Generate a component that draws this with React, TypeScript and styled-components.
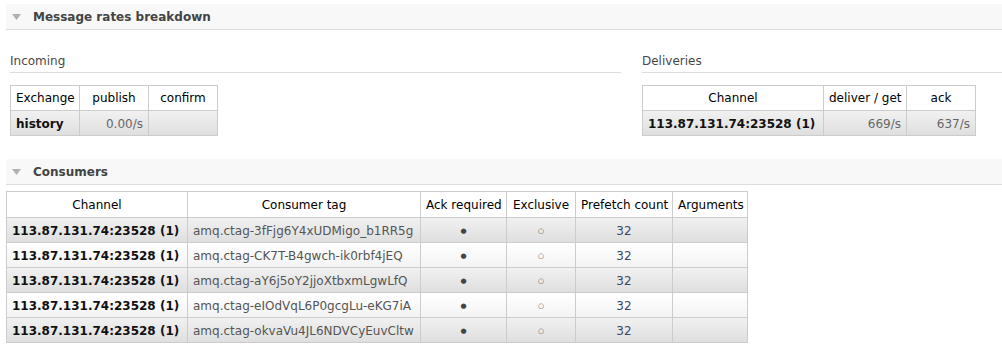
import React from 'react';
import styled, { createGlobalStyle } from 'styled-components';

const Global = createGlobalStyle`
  html, body { margin: 0; padding: 0; background: #fff; }
  body {
    font-family: "DejaVu Sans", Verdana, sans-serif;
    font-size: 12px;
    color: #484848;
  }
`;

const Page = styled.div`
  padding: 4px 0 0 6px;
  overflow: hidden;
`;

const SectionBar = styled.h2<{ $top?: number }>`
  margin: ${p => p.$top ?? 0}px 0 0 0;
  height: 25px;
  display: flex;
  align-items: center;
  gap: 12px;
  padding-left: 6px;
  background: #f8f8f8;
  border-bottom: 1px solid #ddd;
  font-size: 12px;
  font-weight: bold;
  color: #444;
`;

const Triangle = styled.svg`
  width: 9px;
  height: 6px;
  flex: none;
`;

const Columns = styled.div`
  display: grid;
  grid-template-columns: 611px 1fr;
  column-gap: 21px;
  padding-left: 4px;
  margin-top: 23px;
`;

const ColTitle = styled.h3`
  margin: 0;
  font-size: 12px;
  font-weight: normal;
  line-height: 16px;
  padding-bottom: 3px;
  border-bottom: 1px solid #ddd;
  color: #484848;
`;

const Table = styled.table<{ $w: number; $top: number }>`
  border-collapse: collapse;
  table-layout: fixed;
  width: ${p => p.$w}px;
  margin-top: ${p => p.$top}px;
`;

const Col = styled.col<{ $w: number }>`
  width: ${p => p.$w}px;
`;

const Th = styled.th<{ $tall?: boolean }>`
  border: 1px solid #ccc;
  padding: ${p => (p.$tall ? '5px 5px 4px' : '4px 5px')};
  line-height: 16px;
  font-weight: normal;
  color: #000;
  background: #fff;
  text-align: center;
  white-space: nowrap;
`;

const Tr = styled.tr<{ $alt: boolean }>`
  background: ${p =>
    p.$alt
      ? 'linear-gradient(#f1f1f1, #dedede)'
      : 'linear-gradient(#ffffff, #f3f3f3)'};
`;

const Td = styled.td<{ $align?: 'left' | 'right' | 'center'; $bold?: boolean; $tone?: string }>`
  border: 1px solid #ccc;
  padding: 5px 5px 3px;
  height: 16px;
  line-height: 16px;
  white-space: nowrap;
  overflow: hidden;
  text-align: ${p => p.$align ?? 'left'};
  font-weight: ${p => (p.$bold ? 'bold' : 'normal')};
  color: ${p => p.$tone ?? '#484848'};
`;

const Mark = styled.span`
  display: inline-block;
  height: 16px;
  font-size: 7px;
  line-height: 16px;
  vertical-align: top;
`;

const Arrow = () => (
  <Triangle viewBox="0 0 9 6">
    <polygon points="0,0 9,0 4.5,6" fill="#b0b0b0" />
  </Triangle>
);

const tags = [
  'amq.ctag-3fFjg6Y4xUDMigo_b1RR5g',
  'amq.ctag-CK7T-B4gwch-ik0rbf4jEQ',
  'amq.ctag-aY6j5oY2jjoXtbxmLgwLfQ',
  'amq.ctag-eIOdVqL6P0gcgLu-eKG7iA',
  'amq.ctag-okvaVu4JL6NDVCyEuvCltw',
];

const channel = '113.87.131.74:23528 (1)';

export default function App() {
  return (
    <>
      <Global />
      <Page>
        <SectionBar>
          <Arrow />
          Message rates breakdown
        </SectionBar>
        <Columns>
          <div>
            <ColTitle>Incoming</ColTitle>
            <Table $w={208} $top={12}>
              <colgroup>
                <Col $w={69} />
                <Col $w={69} />
                <Col $w={69} />
              </colgroup>
              <thead>
                <tr>
                  <Th>Exchange</Th>
                  <Th>publish</Th>
                  <Th>confirm</Th>
                </tr>
              </thead>
              <tbody>
                <Tr $alt>
                  <Td $bold $tone="#111">history</Td>
                  <Td $align="right" $tone="#666">0.00/s</Td>
                  <Td />
                </Tr>
              </tbody>
            </Table>
          </div>
          <div>
            <ColTitle>Deliveries</ColTitle>
            <Table $w={334} $top={12}>
              <colgroup>
                <Col $w={181} />
                <Col $w={83} />
                <Col $w={69} />
              </colgroup>
              <thead>
                <tr>
                  <Th>Channel</Th>
                  <Th>deliver / get</Th>
                  <Th>ack</Th>
                </tr>
              </thead>
              <tbody>
                <Tr $alt>
                  <Td $bold $tone="#111">{channel}</Td>
                  <Td $align="right" $tone="#666">669/s</Td>
                  <Td $align="right" $tone="#666">637/s</Td>
                </Tr>
              </tbody>
            </Table>
          </div>
        </Columns>

        <SectionBar $top={23}>
          <Arrow />
          Consumers
        </SectionBar>
        <Table $w={742} $top={6}>
          <colgroup>
            <Col $w={181} />
            <Col $w={233} />
            <Col $w={86} />
            <Col $w={69} />
            <Col $w={97} />
            <Col $w={75} />
          </colgroup>
          <thead>
            <tr>
              <Th $tall>Channel</Th>
              <Th $tall>Consumer tag</Th>
              <Th $tall>Ack required</Th>
              <Th $tall>Exclusive</Th>
              <Th $tall>Prefetch count</Th>
              <Th $tall>Arguments</Th>
            </tr>
          </thead>
          <tbody>
            {tags.map((t, i) => (
              <Tr key={t} $alt={i % 2 === 0}>
                <Td $bold $tone="#111">{channel}</Td>
                <Td $tone="#555">{t}</Td>
                <Td $align="center" $tone="#444"><Mark>●</Mark></Td>
                <Td $align="center" $tone="#555"><Mark>○</Mark></Td>
                <Td $align="center" $tone="#3a4866">32</Td>
                <Td />
              </Tr>
            ))}
          </tbody>
        </Table>
      </Page>
    </>
  );
}
